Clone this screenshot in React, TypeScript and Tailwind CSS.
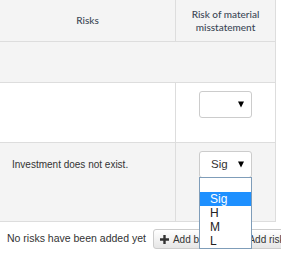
import React from 'react';

const Arrow = () => (
  <svg width="6" height="7" viewBox="0 0 6 7" className="shrink-0">
    <path d="M0 0.5 H6 L3 6.5 Z" fill="#000" />
  </svg>
);

const Plus = () => (
  <svg width="9" height="9" viewBox="0 0 9 9" className="shrink-0">
    <path d="M3.3 0 H5.7 V3.3 H9 V5.7 H5.7 V9 H3.3 V5.7 H0 V3.3 H3.3 Z" fill="#333" />
  </svg>
);

const Select = ({ value }: { value?: string }) => (
  <div className="flex h-[27px] w-[53px] items-center justify-between rounded-[3px] border border-[#ccc] bg-white pl-[11px] pr-[7px] text-[11.5px] text-[#333]">
    <span>{value ?? ''}</span>
    <Arrow />
  </div>
);

const options = ['', 'Sig', 'H', 'M', 'L'];

export default function App() {
  return (
    <div className="relative h-[257px] w-[281px] overflow-hidden bg-white font-['Liberation_Sans',Arial,sans-serif]">
      <div className="w-[276px]">
        {/* header */}
        <div className="flex h-[42px] border-b border-[#ddd] bg-[#f4f4f4] font-['Lato',sans-serif] text-[10px] leading-[13px] text-[#3b4754]">
          <div className="flex w-[176px] items-center justify-center border-r border-[#ddd] font-medium">Risks</div>
          <div className="flex w-[100px] items-center justify-center border-r border-[#ddd] text-center font-medium">
            Risk of material
            <br />
            misstatement
          </div>
        </div>

        <div className="h-[41px] border-b border-r border-[#ddd] bg-[#f4f4f4]" />

        <div className="flex h-[60px] border-b border-[#ddd] bg-white">
          <div className="w-[176px] border-r border-[#ddd]" />
          <div className="w-[100px] border-r border-[#ddd] pl-[23px] pt-[8px]">
            <Select />
          </div>
        </div>

        <div className="flex h-[79px] border-b border-[#ddd] bg-[#f4f4f4] text-[10px] text-[#333]">
          <div className="w-[176px] border-r border-[#ddd] pl-[12px] pt-[8px]">
            <div className="flex h-[27px] items-center">Investment does not exist.</div>
          </div>
          <div className="w-[100px] border-r border-[#ddd] pl-[23px] pt-[8px]">
            <Select value="Sig" />
          </div>
        </div>
      </div>

      {/* footer */}
      <div className="flex items-center whitespace-nowrap pl-[7px] pt-[7px] text-[10.5px] text-[#333]">
        <span>No risks have been added yet</span>
        <div className="ml-[7px] flex h-[20px] items-center gap-[4px] rounded-[3px] border border-[#ccc] bg-gradient-to-b from-white to-[#e6e6e6] px-[6px] text-[10px]">
          <Plus />
          <span>Add blank</span>
        </div>
        <div className="ml-[4px] flex h-[20px] items-center gap-[4px] rounded-[3px] border border-[#ccc] bg-gradient-to-b from-white to-[#e6e6e6] px-[6px] text-[10px]">
          <Plus />
          <span>Add risk</span>
        </div>
      </div>

      {/* open select list */}
      <div className="absolute left-[199px] top-[177px] w-[53px] border border-[#7f9db9] bg-white text-[12px] leading-[14px] text-[#222]">
        {options.map((o, i) => (
          <div key={i} className={`h-[14px] pl-[10px] ${o === 'Sig' ? 'bg-[#1e90ff] text-white' : ''}`}>
            {o}
          </div>
        ))}
      </div>
    </div>
  );
}
